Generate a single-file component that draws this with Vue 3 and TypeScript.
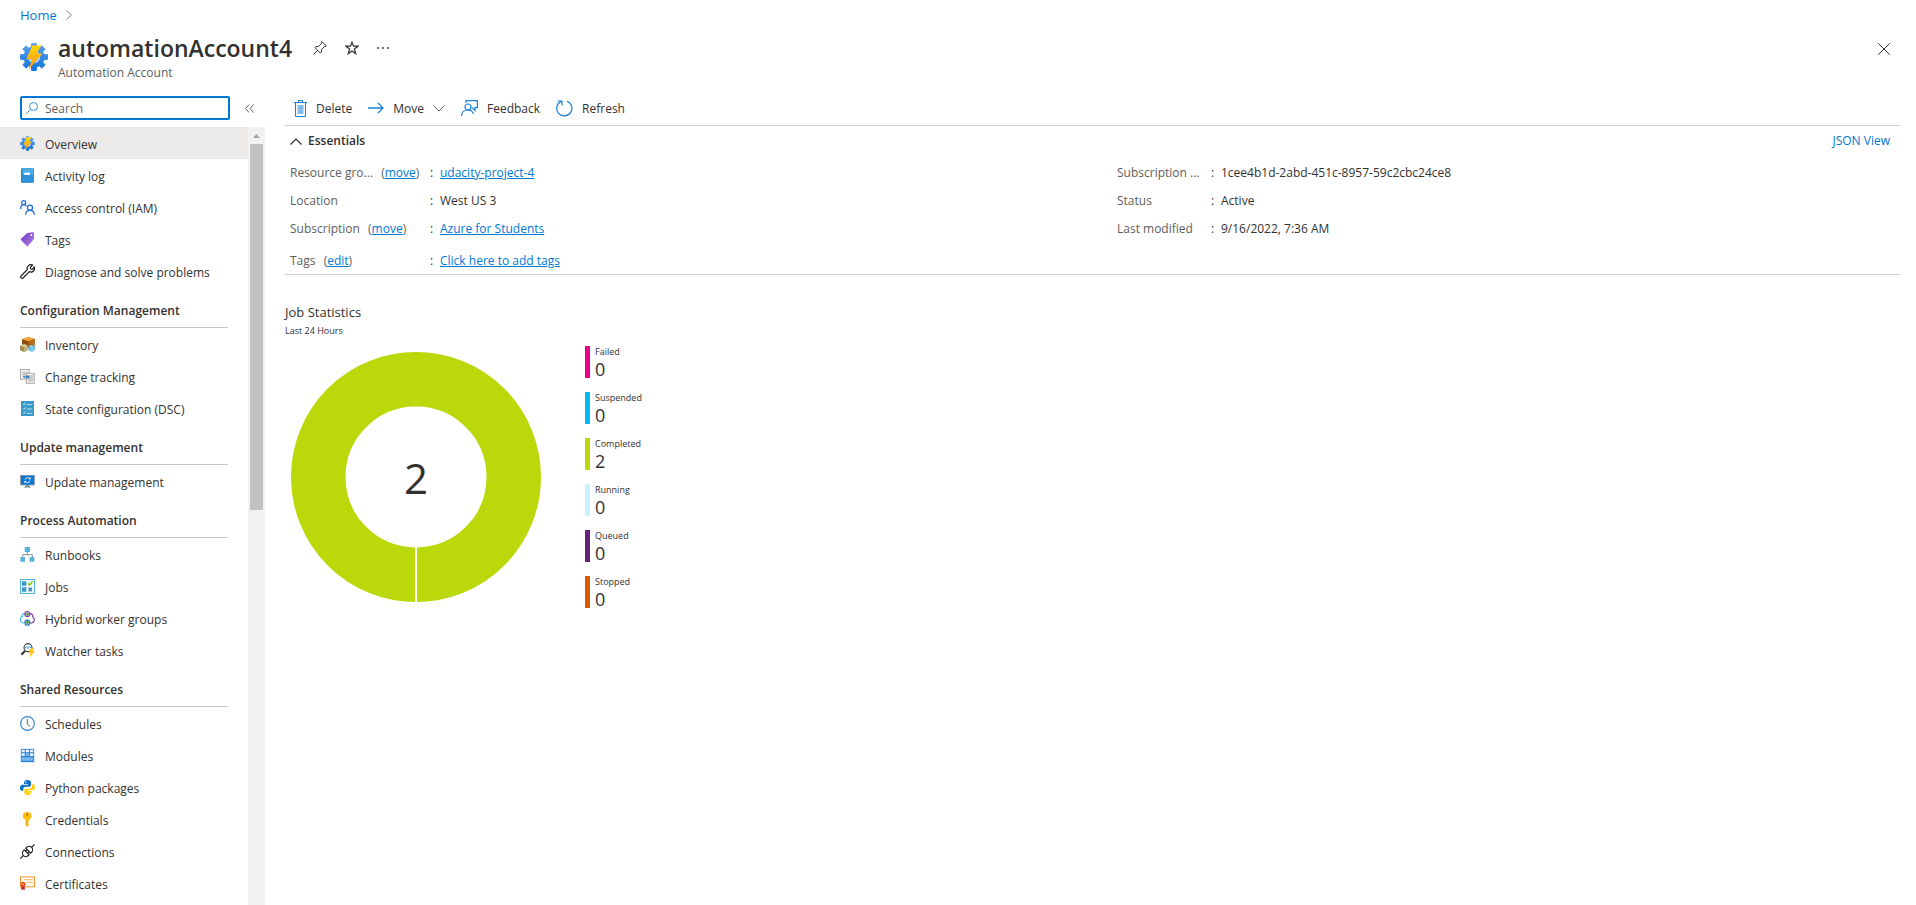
<script setup lang="ts">
import { ref } from 'vue'

interface NavItem {
  label: string
  icon: string
}
interface NavSection {
  title?: string
  items: NavItem[]
}
interface Fact {
  label: string
  action?: string
  value: string
  link?: boolean
}
interface Stat {
  label: string
  value: number
  tone: string
}

const search = ref('')
const selected = ref('Overview')

const sections: NavSection[] = [
  {
    items: [
      { label: 'Overview', icon: 'gear' },
      { label: 'Activity log', icon: 'log' },
      { label: 'Access control (IAM)', icon: 'people' },
      { label: 'Tags', icon: 'tag' },
      { label: 'Diagnose and solve problems', icon: 'wrench' },
    ],
  },
  {
    title: 'Configuration Management',
    items: [
      { label: 'Inventory', icon: 'inventory' },
      { label: 'Change tracking', icon: 'change' },
      { label: 'State configuration (DSC)', icon: 'state' },
    ],
  },
  {
    title: 'Update management',
    items: [{ label: 'Update management', icon: 'update' }],
  },
  {
    title: 'Process Automation',
    items: [
      { label: 'Runbooks', icon: 'runbooks' },
      { label: 'Jobs', icon: 'jobs' },
      { label: 'Hybrid worker groups', icon: 'hybrid' },
      { label: 'Watcher tasks', icon: 'watcher' },
    ],
  },
  {
    title: 'Shared Resources',
    items: [
      { label: 'Schedules', icon: 'clock' },
      { label: 'Modules', icon: 'modules' },
      { label: 'Python packages', icon: 'python' },
      { label: 'Credentials', icon: 'key' },
      { label: 'Connections', icon: 'plug' },
      { label: 'Certificates', icon: 'certificate' },
    ],
  },
]

const leftFacts: Fact[] = [
  { label: 'Resource gro...', action: 'move', value: 'udacity-project-4', link: true },
  { label: 'Location', value: 'West US 3' },
  { label: 'Subscription', action: 'move', value: 'Azure for Students', link: true },
  { label: 'Tags', action: 'edit', value: 'Click here to add tags', link: true },
]

const rightFacts: Fact[] = [
  { label: 'Subscription ...', value: '1cee4b1d-2abd-451c-8957-59c2cbc24ce8' },
  { label: 'Status', value: 'Active' },
  { label: 'Last modified', value: '9/16/2022, 7:36 AM' },
]

const stats: Stat[] = [
  { label: 'Failed', value: 0, tone: 'failed' },
  { label: 'Suspended', value: 0, tone: 'suspended' },
  { label: 'Completed', value: 2, tone: 'completed' },
  { label: 'Running', value: 0, tone: 'running' },
  { label: 'Queued', value: 0, tone: 'queued' },
  { label: 'Stopped', value: 0, tone: 'stopped' },
]

// Outline of an eight-toothed cog centred in a 45-unit box.
function cogOutline(): string {
  const points: string[] = []
  const corners: [number, number][] = [
    [-14, 16.5],
    [-10, 22],
    [10, 22],
    [14, 16.5],
  ]
  for (let tooth = 0; tooth < 8; tooth++) {
    for (const [offset, radius] of corners) {
      const angle = ((tooth * 45 + offset) * Math.PI) / 180
      const x = 22.5 + radius * Math.sin(angle)
      const y = 22.5 - radius * Math.cos(angle)
      points.push(`${x.toFixed(1)} ${y.toFixed(1)}`)
    }
  }
  return `M${points.join('L')}Z`
}
const cog = cogOutline()
</script>

<template>
  <div class="page">
    <svg class="sprite" aria-hidden="true">
      <defs>
        <linearGradient id="blue-fade" x1="0" y1="0" x2="0" y2="1">
          <stop offset="0" stop-color="#5ea0ef" />
          <stop offset="1" stop-color="#0f74d8" />
        </linearGradient>
        <linearGradient id="bolt-fade" x1="0" y1="0" x2="0" y2="1">
          <stop offset="0" stop-color="#ffd400" />
          <stop offset="1" stop-color="#f7921e" />
        </linearGradient>
        <linearGradient id="violet-fade" x1="0" y1="0" x2="1" y2="1">
          <stop offset="0" stop-color="#6b2fc4" />
          <stop offset="1" stop-color="#b78be0" />
        </linearGradient>
      </defs>
      <symbol id="gear" viewBox="0 0 45 45">
        <path :d="cog" fill="url(#blue-fade)" stroke="url(#blue-fade)" stroke-width="1.5" stroke-linejoin="round" />
        <circle cx="22.5" cy="22.5" r="10" fill="#b5d5f6" />
        <path d="M20 4h14L27 17h9L14 43l5-17h-9z" fill="url(#bolt-fade)" />
      </symbol>
      <symbol id="log" viewBox="0 0 45 45">
        <rect x="3" y="1" width="39" height="43" rx="3" fill="#1a7fc9" />
        <rect x="7" y="3" width="34" height="37" rx="2" fill="#4cacec" />
        <path d="M8 20h33v20H8z" fill="#2f93dc" />
        <rect x="13" y="14" width="17" height="7" fill="#fff" />
      </symbol>
      <symbol id="people" viewBox="0 0 45 45" fill="none" stroke="#1c6cd6" stroke-width="3.800">
        <circle cx="11" cy="8" r="6" />
        <path d="M2 27c0-9 4-13 9-13 4 0 7 2 8 5" />
        <circle cx="30" cy="23" r="7.5" />
        <path d="M17 44c0-8 5-13 13-13s13 5 13 13" />
      </symbol>
      <symbol id="tag" viewBox="0 0 45 45">
        <path d="M3 20L22 3l17-2q3 0 3 3v17L24 42q-2 2-4 0L3 24q-2-2 0-4z" fill="url(#violet-fade)" />
        <circle cx="34" cy="9" r="3" fill="#fff" />
      </symbol>
      <symbol id="wrench" viewBox="0 0 45 45" fill="none" stroke="#1a1a1a" stroke-width="3.600" stroke-linejoin="round">
        <path d="M22 17C19 7 29-1 38 3l-7 7 1 5 5 1 6-7c3 9-5 18-15 14L9 42c-4 3-9-2-6-6z" />
      </symbol>
      <symbol id="inventory" viewBox="0 0 45 45">
        <path d="M6 7L26 0l18 6v20L25 34 6 28z" fill="#8c4f10" />
        <path d="M6 7L26 0l18 6-18 7z" fill="#f0a53a" />
        <path d="M26 13l18-7v20l-18 8z" fill="#bd6c14" />
        <path d="M0 26l12-5 12 5v13l-12 6-12-5z" fill="#a08b56" />
        <path d="M0 26l12-5 12 5-12 5z" fill="#dccb98" />
        <path d="M12 31l12-5v13l-12 6z" fill="#c4b07a" />
        <circle cx="35" cy="34" r="10" fill="#59b4e3" />
        <path d="M30 29q8-2 7 3t-5 9M38 38h5" stroke="#d7f0fb" stroke-width="2.5" fill="none" />
      </symbol>
      <symbol id="change" viewBox="0 0 45 45">
        <rect x="1.5" y="1.5" width="26" height="29" fill="#f5f5f5" stroke="#a9a9a9" stroke-width="3" />
        <path d="M7 7h15v18H7z" fill="#c9c9c9" />
        <rect x="19" y="13" width="24" height="30" fill="#f5f5f5" stroke="#a9a9a9" stroke-width="3" />
        <path d="M24 18h15v20H24z" fill="#c9c9c9" />
        <path d="M10 22h11v-5l9 7-9 7v-5H10z" fill="#2a86d8" />
      </symbol>
      <symbol id="state" viewBox="0 0 45 45">
        <rect x="3" y="0" width="39" height="45" fill="#3999c6" />
        <path d="M9 9l3 3 5-7M9 22l3 3 5-7M9 35l3 3 5-7M20 11h17M20 24h17M20 37h17" fill="none" stroke="#d6effa" stroke-width="2.5" />
      </symbol>
      <symbol id="update" viewBox="0 0 45 45">
        <rect x="0" y="3" width="45" height="31" fill="#9aa3aa" />
        <rect x="3" y="5" width="39" height="27" fill="#0a78d2" />
        <path d="M17 34h11l3 6H14z" fill="#7d868c" />
        <path d="M12 39h21v3H12z" fill="#b5bbbf" />
        <path d="M15 17q2-6 8-6 4 0 6 3M30 20q-2 6-8 6-4 0-6-3" fill="none" stroke="#fff" stroke-width="2.500" />
        <path d="M32 9v7h-7zM13 28v-7h7z" fill="#fff" />
      </symbol>
      <symbol id="runbooks" viewBox="0 0 45 45">
        <path d="M22 14v8M8 31v-8h29v8" fill="none" stroke="#8a8f94" stroke-width="3" />
        <path d="M14 0h16v15H14zM1 30h14v14H1zM29 30h14v14H29z" fill="#59b4d9" />
      </symbol>
      <symbol id="jobs" viewBox="0 0 45 45">
        <rect x="1.5" y="1.5" width="42" height="42" fill="#f3fafd" stroke="#59b4d9" stroke-width="3" />
        <path d="M6 7h13v13H6zM6 25h13v13H6z" fill="#3999c6" />
        <path d="M24 13l5 5 9-11" fill="none" stroke="#7fba00" stroke-width="4" />
        <path d="M26 26l10 11M36 26L26 37" fill="none" stroke="#1c70b8" stroke-width="4" />
      </symbol>
      <symbol id="hybrid" viewBox="0 0 45 45">
        <path d="M12 36C-2 36-1 17 7 17 5 9 11 7 16 7" fill="none" stroke="#4ab6e6" stroke-width="3.500" />
        <path d="M29 8c8 0 10 4 9 9 8 5 6 19-4 19h-4" fill="none" stroke="#7c3c96" stroke-width="3.500" />
        <circle cx="22" cy="9" r="7.500" fill="#efe3f5" stroke="#7c3c96" stroke-width="3.500" />
        <circle cx="22" cy="35" r="7.500" fill="#dceefa" stroke="#1c78c8" stroke-width="3.500" />
        <path d="M22 5v9M17 9.500h10M17 34.500h10M22 30v9" stroke="#4f9a2c" stroke-width="4" />
      </symbol>
      <symbol id="watcher" viewBox="0 0 45 45">
        <circle cx="24" cy="14" r="12" fill="#e9f6fd" stroke="#444" stroke-width="3.5" />
        <path d="M15 15l4-4 4 6 4-7 6 5" fill="none" stroke="#3999c6" stroke-width="2.5" />
        <path d="M15 24L4 35" stroke="#2b2b2b" stroke-width="6" />
        <path d="M33 15h9l-4 10h7L28 44l4-13h-7z" fill="#ffc21a" />
      </symbol>
      <symbol id="clock" viewBox="0 0 45 45">
        <circle cx="22.5" cy="22.5" r="20.5" fill="#fbfdff" stroke="#3a84cc" stroke-width="3.500" />
        <path d="M22 9v15l8 7" fill="none" stroke="#5b6670" stroke-width="3" />
      </symbol>
      <symbol id="modules" viewBox="0 0 45 45">
        <rect width="45" height="45" fill="#dcecfa" />
        <rect x="3" y="3" width="39" height="39" fill="#2f7fd6" />
        <path d="M5 5h9v8H5zM17 5h10v8H17zM30 5h10v8H30zM5 16h9v8H5zM30 16h10v8H30z" fill="#e8f3fd" />
        <path d="M17 16h10v8H17zM5 28h35v10H5z" fill="#79b9f2" />
      </symbol>
      <symbol id="python" viewBox="0 0 45 45">
        <path d="M22 0c-8 0-10 3-10 7v5h12v2H7c-5 0-7 4-7 9s2 9 6 9h4v-5c0-4 3-7 7-7h11c3 0 5-2 5-5V7c0-5-5-7-11-7z" fill="#0f74c4" />
        <path d="M24 45c8 0 10-3 10-7v-5H22v-2h16c5 0 7-4 7-9s-2-9-6-9h-3v6c0 4-3 7-7 7H18c-3 0-5 2-5 5v7c0 5 5 7 11 7z" fill="#fdd017" />
        <circle cx="17" cy="6" r="2.2" fill="#fff" />
        <circle cx="29" cy="39" r="2.2" fill="#fff" />
      </symbol>
      <symbol id="key" viewBox="0 0 45 45">
        <path d="M21 0c8 0 14 4 14 12 0 6-4 9-8 11v3l-3 3 3 3-3 3 3 4-5 6-5-5V23c-6-2-9-6-9-11C8 4 14 0 21 0z" fill="#fdbf12" />
        <path d="M18 24h3v18l-3-2z" fill="#e9a000" />
        <circle cx="21.500" cy="8" r="3.500" fill="#b77600" />
      </symbol>
      <symbol id="plug" viewBox="0 0 45 45" fill="none" stroke="#1f1f1f" stroke-width="3.500">
        <path d="M1 44l9-9M35 10l9-9" />
        <g transform="rotate(-45 22.500 22.500)">
          <path d="M19 12h-2a12 10.500 0 0 0 0 21h2zM26 12h2a12 10.500 0 0 1 0 21h-2z" />
          <path d="M19 18h7M19 27h7" />
        </g>
      </symbol>
      <symbol id="certificate" viewBox="0 0 45 45">
        <rect x="1.500" y="2.500" width="42" height="30" fill="#fff8ef" stroke="#f29a38" stroke-width="3" />
        <path d="M12 11h26M20 19h18" stroke="#f3b77a" stroke-width="3" />
        <path d="M4 30h10v13l-5-3-5 3z" fill="#b8201c" />
        <circle cx="9" cy="25" r="8" fill="#e2532d" />
        <circle cx="9" cy="25" r="3" fill="#f9a25e" />
      </symbol>
    </svg>

    <header>
      <nav class="crumbs" aria-label="Breadcrumb">
        <a href="#">Home</a>
        <svg width="6" height="10" viewBox="0 0 6 10"><path d="M0.500 0.500L5.500 5L0.500 9.500" fill="none" stroke="#8a8886" /></svg>
      </nav>
      <div class="title-row">
        <svg class="logo"><use href="#gear" /></svg>
        <div class="titles">
          <div class="title-line">
            <h1>automationAccount4</h1>
            <button type="button" aria-label="Pin">
              <svg width="14" height="14" viewBox="0 0 14 14" fill="none" stroke="#323130"><path d="M9 0.700L13.300 5 12 5.700 11.400 5.500 8.500 8.500 8.300 11.300 7.300 12 2 6.700 2.800 5.700 5.500 5.500 8.500 2.600 8.200 1.800zM4.700 9.300L0.500 13.500" /></svg>
            </button>
            <button type="button" aria-label="Favorite">
              <svg width="14" height="14" viewBox="0 0 14 14" fill="none" stroke="#323130" stroke-width="1.200"><path d="M7 1.200L8.500 5.200H13L9.400 8 10.700 12.600 7 9.900 3.300 12.600 4.600 8 1 5.200H5.500z" /></svg>
            </button>
            <button type="button" aria-label="More">
              <svg width="12" height="14" viewBox="0 0 12 14" fill="#797775"><path d="M0 6h2v2H0zM5 6h2v2H5zM10 6h2v2h-2z" /></svg>
            </button>
          </div>
          <p class="subtitle">Automation Account</p>
        </div>
        <button type="button" class="close" aria-label="Close">
          <svg width="12" height="12" viewBox="0 0 12 12"><path d="M0.300 0.300L11.700 11.700M11.700 0.300L0.300 11.700" stroke="#323130" /></svg>
        </button>
      </div>
    </header>

    <div class="body">
      <aside>
        <div class="search-row">
          <div class="search">
            <svg width="12" height="12" viewBox="0 0 12 12" fill="none" stroke="#3b8ede"><circle cx="7.500" cy="4.500" r="4" /><path d="M4.500 7.500L0.300 11.700" /></svg>
            <input v-model="search" type="text" placeholder="Search" aria-label="Search">
          </div>
          <button type="button" class="collapse" aria-label="Collapse menu">
            <svg width="9" height="9" viewBox="0 0 9 9" fill="none" stroke="#605e5c"><path d="M4 0.500L0.500 4.500 4 8.500M8.500 0.500L5 4.500 8.500 8.500" /></svg>
          </button>
        </div>
        <div class="menu">
          <nav aria-label="Resource menu">
            <section v-for="(section, i) in sections" :key="i">
              <h2 v-if="section.title">{{ section.title }}</h2>
              <a
                v-for="item in section.items"
                :key="item.label"
                href="#"
                :class="{ selected: item.label === selected }"
                @click.prevent="selected = item.label"
              >
                <svg class="icon"><use :href="'#' + item.icon" /></svg>
                <span>{{ item.label }}</span>
              </a>
            </section>
          </nav>
          <div class="scrollbar" aria-hidden="true">
            <svg width="7" height="4" viewBox="0 0 7 4"><path d="M0 4L3.500 0L7 4z" fill="#a3a3a3" /></svg>
            <div class="thumb" />
          </div>
        </div>
      </aside>

      <main>
        <div class="toolbar">
          <button type="button">
            <svg width="13" height="17" viewBox="0 0 13 17" fill="none" stroke="#1a80d9"><path d="M0 2.500h13M4.500 2V0.500h4V2" /><path d="M1.500 3v13.500h10V3" /><path d="M3.500 5h6v9h-6z" fill="#83bbea" stroke="none" /></svg>
            <span>Delete</span>
          </button>
          <button type="button">
            <svg width="16" height="12" viewBox="0 0 16 12" fill="none" stroke="#1a80d9" stroke-width="1.300"><path d="M0 6h15M10 1l5 5-5 5" /></svg>
            <span>Move</span>
            <svg width="12" height="7" viewBox="0 0 12 7" fill="none" stroke="#605e5c"><path d="M0.500 0.500L6 6L11.500 0.500" /></svg>
          </button>
          <button type="button">
            <svg width="17" height="16" viewBox="0 0 17 16" fill="none" stroke="#1a80d9" stroke-width="1.200"><path d="M5 3V0.600h11.400v7H14v3l-3-3" /><circle cx="7" cy="7" r="3" /><path d="M0.600 16c0-4 2-6 6.400-6s4.400 2 5.400 4" /></svg>
            <span>Feedback</span>
          </button>
          <button type="button">
            <svg width="17" height="17" viewBox="0 0 17 17" fill="none" stroke="#1a80d9" stroke-width="1.200"><path d="M11 1.200a7.600 7.600 0 1 1-6 0.300M1.500 1h4.500v4.500" /></svg>
            <span>Refresh</span>
          </button>
        </div>

        <section class="essentials">
          <div class="essentials-head">
            <button type="button">
              <svg width="12" height="7" viewBox="0 0 12 7" fill="none" stroke="#323130" stroke-width="1.200"><path d="M0.500 6.500L6 1L11.500 6.500" /></svg>
              Essentials
            </button>
            <a href="#">JSON View</a>
          </div>
          <div class="facts">
            <dl class="wide">
              <div v-for="fact in leftFacts" :key="fact.label" class="fact">
                <dt>
                  {{ fact.label }}
                  <span v-if="fact.action" class="action">(<a href="#">{{ fact.action }}</a>)</span>
                </dt>
                <dd>
                  <span class="colon">:</span>
                  <a v-if="fact.link" href="#">{{ fact.value }}</a>
                  <span v-else>{{ fact.value }}</span>
                </dd>
              </div>
            </dl>
            <dl>
              <div v-for="fact in rightFacts" :key="fact.label" class="fact">
                <dt>{{ fact.label }}</dt>
                <dd><span class="colon">:</span><span>{{ fact.value }}</span></dd>
              </div>
            </dl>
          </div>
        </section>

        <section class="jobs">
          <h2>Job Statistics</h2>
          <p>Last 24 Hours</p>
          <div class="chart">
            <svg class="donut" width="250" height="250" viewBox="0 0 250 250" role="img" aria-label="2 jobs">
              <circle cx="125" cy="125" r="97.750" fill="none" stroke="#bad80a" stroke-width="54.500" />
              <path d="M125 195v55" stroke="#fff" stroke-width="2" />
              <text x="125" y="142" text-anchor="middle">2</text>
            </svg>
            <ul>
              <li v-for="stat in stats" :key="stat.label" :class="stat.tone">
                <span>{{ stat.label }}</span>
                <strong>{{ stat.value }}</strong>
              </li>
            </ul>
          </div>
        </section>
      </main>
    </div>
  </div>
</template>

<style>
body {
  margin: 0;
  background: #fff;
}
</style>

<style scoped>
.page {
  display: flex;
  flex-direction: column;
  height: 100vh;
  overflow: hidden;
  font: 12px/16px "Segoe UI", "Open Sans", "Noto Sans", sans-serif;
  color: #323130;
}
.sprite {
  position: absolute;
  width: 0;
  height: 0;
}
h1,
h2,
p,
dl,
dd,
ul {
  margin: 0;
  padding: 0;
}
a {
  color: #0078d4;
}
button {
  display: flex;
  align-items: center;
  padding: 0;
  border: 0;
  background: none;
  font: inherit;
  color: inherit;
}
svg {
  flex: none;
}
header {
  flex: none;
  height: 91px;
}
.crumbs {
  display: flex;
  align-items: center;
  gap: 9px;
  height: 30px;
  padding-left: 20px;
}
.crumbs a {
  font-size: 13px;
  text-decoration: none;
}
.title-row {
  display: flex;
  padding: 0 26px 0 20px;
}
.logo {
  width: 28px;
  height: 28px;
  margin-top: 13px;
}
.titles {
  flex: 1;
  margin-left: 10px;
}
.title-line {
  display: flex;
  align-items: center;
  height: 36px;
}
h1 {
  margin-right: 3px;
  font-size: 23px;
  line-height: 36px;
  font-weight: 600;
}
.title-line button {
  margin-left: 18px;
}
.subtitle {
  font-size: 12px;
  line-height: 14px;
  color: #605e5c;
}
.close {
  height: 38px;
}
.body {
  display: flex;
  flex: 1;
  min-height: 0;
}
aside {
  display: flex;
  flex-direction: column;
  width: 265px;
  flex: none;
}
.search-row {
  display: flex;
  gap: 15px;
  padding: 5px 0 7px 20px;
}
.search {
  display: flex;
  align-items: center;
  gap: 7px;
  box-sizing: border-box;
  width: 210px;
  height: 24px;
  padding-left: 4px;
  border: 2px solid #0078d4;
  border-radius: 2px;
}
.search input {
  flex: 1;
  min-width: 0;
  padding: 2px 0 0;
  border: 0;
  outline: 0;
  background: none;
  font: inherit;
  color: inherit;
}
.search input::placeholder {
  color: #605e5c;
  opacity: 1;
}
.menu {
  display: flex;
  flex: 1;
  min-height: 0;
}
.menu nav {
  flex: 1;
  overflow: hidden;
}
.menu h2 {
  height: 40px;
  margin: 0 20px;
  border-bottom: 1px solid #c8c6c4;
  font-size: 12px;
  line-height: 48px;
  font-weight: 600;
}
.menu a {
  display: flex;
  align-items: center;
  gap: 10px;
  box-sizing: border-box;
  height: 32px;
  padding: 1px 0 0 20px;
  color: inherit;
  text-decoration: none;
}
.menu a span,
.toolbar span {
  padding-top: 2px;
}
.menu a.selected {
  background: #edebe9;
}
.icon {
  width: 15px;
  height: 15px;
}
.scrollbar {
  display: flex;
  flex-direction: column;
  align-items: center;
  gap: 6px;
  width: 17px;
  padding-top: 7px;
  box-sizing: border-box;
  background: #f1f1f1;
}
.thumb {
  width: 13px;
  height: 366px;
  background: #c1c1c1;
}
main {
  flex: 1;
  padding: 0 16px 0 20px;
}
.toolbar {
  display: flex;
  gap: 16px;
  height: 34px;
  padding-left: 9px;
  border-bottom: 1px solid #d2d0ce;
}
.toolbar button {
  gap: 9px;
}
.essentials {
  padding: 0 0 0 5px;
  border-bottom: 1px solid #d2d0ce;
}
.essentials-head {
  display: flex;
  justify-content: space-between;
  align-items: center;
  height: 30px;
  padding: 0 10px 3px 0;
}
.essentials-head button {
  gap: 6px;
  font-weight: 600;
}
.essentials-head a {
  text-decoration: none;
}
.facts {
  display: grid;
  grid-template-columns: 1fr 1fr;
  gap: 44px;
}
.fact {
  display: flex;
  line-height: 28px;
}
.fact dt {
  width: 94px;
  color: #605e5c;
}
.wide .fact dt {
  width: 140px;
}
.wide .fact:last-child {
  margin-top: 5px;
  line-height: 26px;
}
.action {
  margin-left: 5px;
}
.colon {
  display: inline-block;
  width: 10px;
}
.jobs {
  padding-top: 27px;
}
.jobs h2 {
  font-size: 13px;
  line-height: 20px;
  font-weight: 400;
}
.jobs p {
  margin-top: 2px;
  font-size: 9px;
  line-height: 14px;
}
.chart {
  display: flex;
  align-items: flex-start;
  gap: 44px;
  padding: 8px 0 0 6px;
}
.donut {
  margin-top: 6px;
}
.donut text {
  font-size: 42px;
  font-weight: 500;
  fill: #323130;
}
ul {
  display: grid;
  gap: 14px;
  list-style: none;
}
li {
  display: flex;
  flex-direction: column;
  height: 32px;
  padding-left: 5px;
  border-left: 5px solid;
}
li span {
  font-size: 9px;
  line-height: 12px;
  color: #323130;
}
li strong {
  font-size: 18px;
  line-height: 22px;
  font-weight: 500;
  color: #323130;
}
.failed {
  border-color: #ec008c;
}
.suspended {
  border-color: #00bcf2;
}
.completed {
  border-color: #bad80a;
}
.running {
  border-color: #c7f1fc;
}
.queued {
  border-color: #68217a;
}
.stopped {
  border-color: #dd5900;
}
</style>
